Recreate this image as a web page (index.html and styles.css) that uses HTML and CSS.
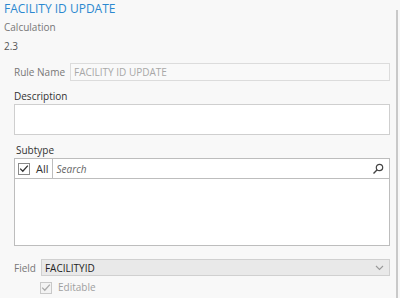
FILE: index.html
```html
<!DOCTYPE html>
<html lang="en">
<head>
  <meta charset="UTF-8">
  <title>Attribute Rule</title>
  <link rel="stylesheet" href="styles.css">
</head>
<body>

  <div class="pane">
    <div class="content">
      <h1 class="rule-title">FACILITY ID UPDATE</h1>
      <div class="rule-type">Calculation</div>
      <div class="rule-version">2.3</div>

      <!-- Rule name -->
      <div class="row name-row">
        <label class="inline-label">Rule Name</label>
        <div class="textbox readonly">FACILITY ID UPDATE</div>
      </div>

      <!-- Description -->
      <label class="block-label">Description</label>
      <div class="textarea"></div>

      <!-- Subtype -->
      <label class="block-label subtype-label">Subtype</label>
      <div class="list-box">
        <div class="list-head">
          <div class="check-all">
            <span class="checkbox">
              <svg width="10" height="9" viewBox="0 0 10 9"><path d="M1.2 4.6 L3.8 7.2 L8.8 1.6" fill="none" stroke="#333" stroke-width="1.3"/></svg>
            </span>
            <span>All</span>
          </div>
          <div class="search">
            <span>Search</span>
            <svg width="12" height="12" viewBox="0 0 12 12"><circle cx="7.5" cy="4.5" r="3.2" fill="none" stroke="#444" stroke-width="1.2"/><path d="M5.2 6.8 L1.5 10.5" stroke="#444" stroke-width="1.4"/></svg>
          </div>
        </div>
        <div class="list-body"></div>
      </div>

      <!-- Field -->
      <div class="row field-row">
        <label class="inline-label">Field</label>
        <div class="select">
          <span>FACILITYID</span>
          <svg width="9" height="6" viewBox="0 0 9 6"><path d="M1 1 L4.5 4.5 L8 1" fill="none" stroke="#999" stroke-width="1.1"/></svg>
        </div>
      </div>
      <div class="editable">
        <span class="checkbox disabled">
          <svg width="10" height="9" viewBox="0 0 10 9"><path d="M1.2 4.6 L3.8 7.2 L8.8 1.6" fill="none" stroke="#aaa" stroke-width="1.3"/></svg>
        </span>
        <span>Editable</span>
      </div>
    </div>
    <div class="scrollbar"></div>
  </div>

</body>
</html>
```

FILE: styles.css
```css
body {
  margin: 0;
  background: #f8f8f8;
  font-family: 'Open Sans', sans-serif;
  color: #333;
  font-size: 10px;
}

.pane {
  display: flex;
  height: 298px;
  overflow: hidden;
}

.content {
  flex: 1;
  padding: 0 6px 0 4px;
}

.scrollbar {
  width: 2px;
  margin-right: 2px;
  background: #c9c9c9;
  margin-top: 10px;
}

.rule-title {
  margin: 0;
  font-size: 12px;
  font-weight: 400;
  color: #2b88d0;
  line-height: 17px;
}

.rule-type {
  color: #777;
  line-height: 15px;
  margin-top: 3px;
}

.rule-version {
  color: #555;
  line-height: 15px;
  margin-top: 4px;
}

.row {
  display: flex;
  align-items: center;
}

.name-row {
  margin: 9px 0 0 10px;
}

.inline-label {
  color: #777;
  margin-right: 5px;
}

.textbox {
  flex: 1;
  height: 16px;
  line-height: 16px;
  border: 1px solid #dcdcdc;
  background: #f9f9f9;
  padding-left: 3px;
}

.readonly {
  color: #a8a8a8;
}

.block-label {
  display: block;
  margin: 8px 0 0 10px;
  line-height: 15px;
  color: #333;
}

.textarea {
  margin-left: 10px;
  height: 29px;
  border: 1px solid #cfcfcf;
  background: #fff;
}

.subtype-label {
  margin-top: 8px;
  margin-left: 12px;
}

.list-box {
  margin-left: 10px;
  border: 1px solid #bdbdbd;
  background: #fff;
}

.list-head {
  display: flex;
  height: 19px;
  border-bottom: 1px solid #bdbdbd;
}

.check-all {
  display: flex;
  align-items: center;
  padding: 0 3px;
  border-right: 1px solid #bdbdbd;
  color: #333;
  font-size: 11px;
}

.check-all span:last-child {
  margin-left: 6px;
}

.checkbox {
  width: 10px;
  height: 10px;
  border: 1px solid #8a8a8a;
  background: #fff;
  display: flex;
  align-items: center;
  justify-content: center;
}

.checkbox.disabled {
  border-color: #c8c8c8;
  background: #f3f3f3;
}

.search {
  flex: 1;
  display: flex;
  align-items: center;
  justify-content: space-between;
  padding: 0 5px 0 4px;
  font-style: italic;
  color: #666;
}

.list-body {
  height: 66px;
}

.field-row {
  margin: 13px 0 0 10px;
}

.select {
  flex: 1;
  height: 15px;
  display: flex;
  align-items: center;
  justify-content: space-between;
  padding: 0 5px 0 3px;
  border: 1px solid #d0d0d0;
  background: #e9e9e9;
  color: #222;
}

.editable {
  display: flex;
  align-items: center;
  margin: 5px 0 0 36px;
  color: #a0a0a0;
  line-height: 13px;
}

.editable span:last-child {
  margin-left: 6px;
}
```
